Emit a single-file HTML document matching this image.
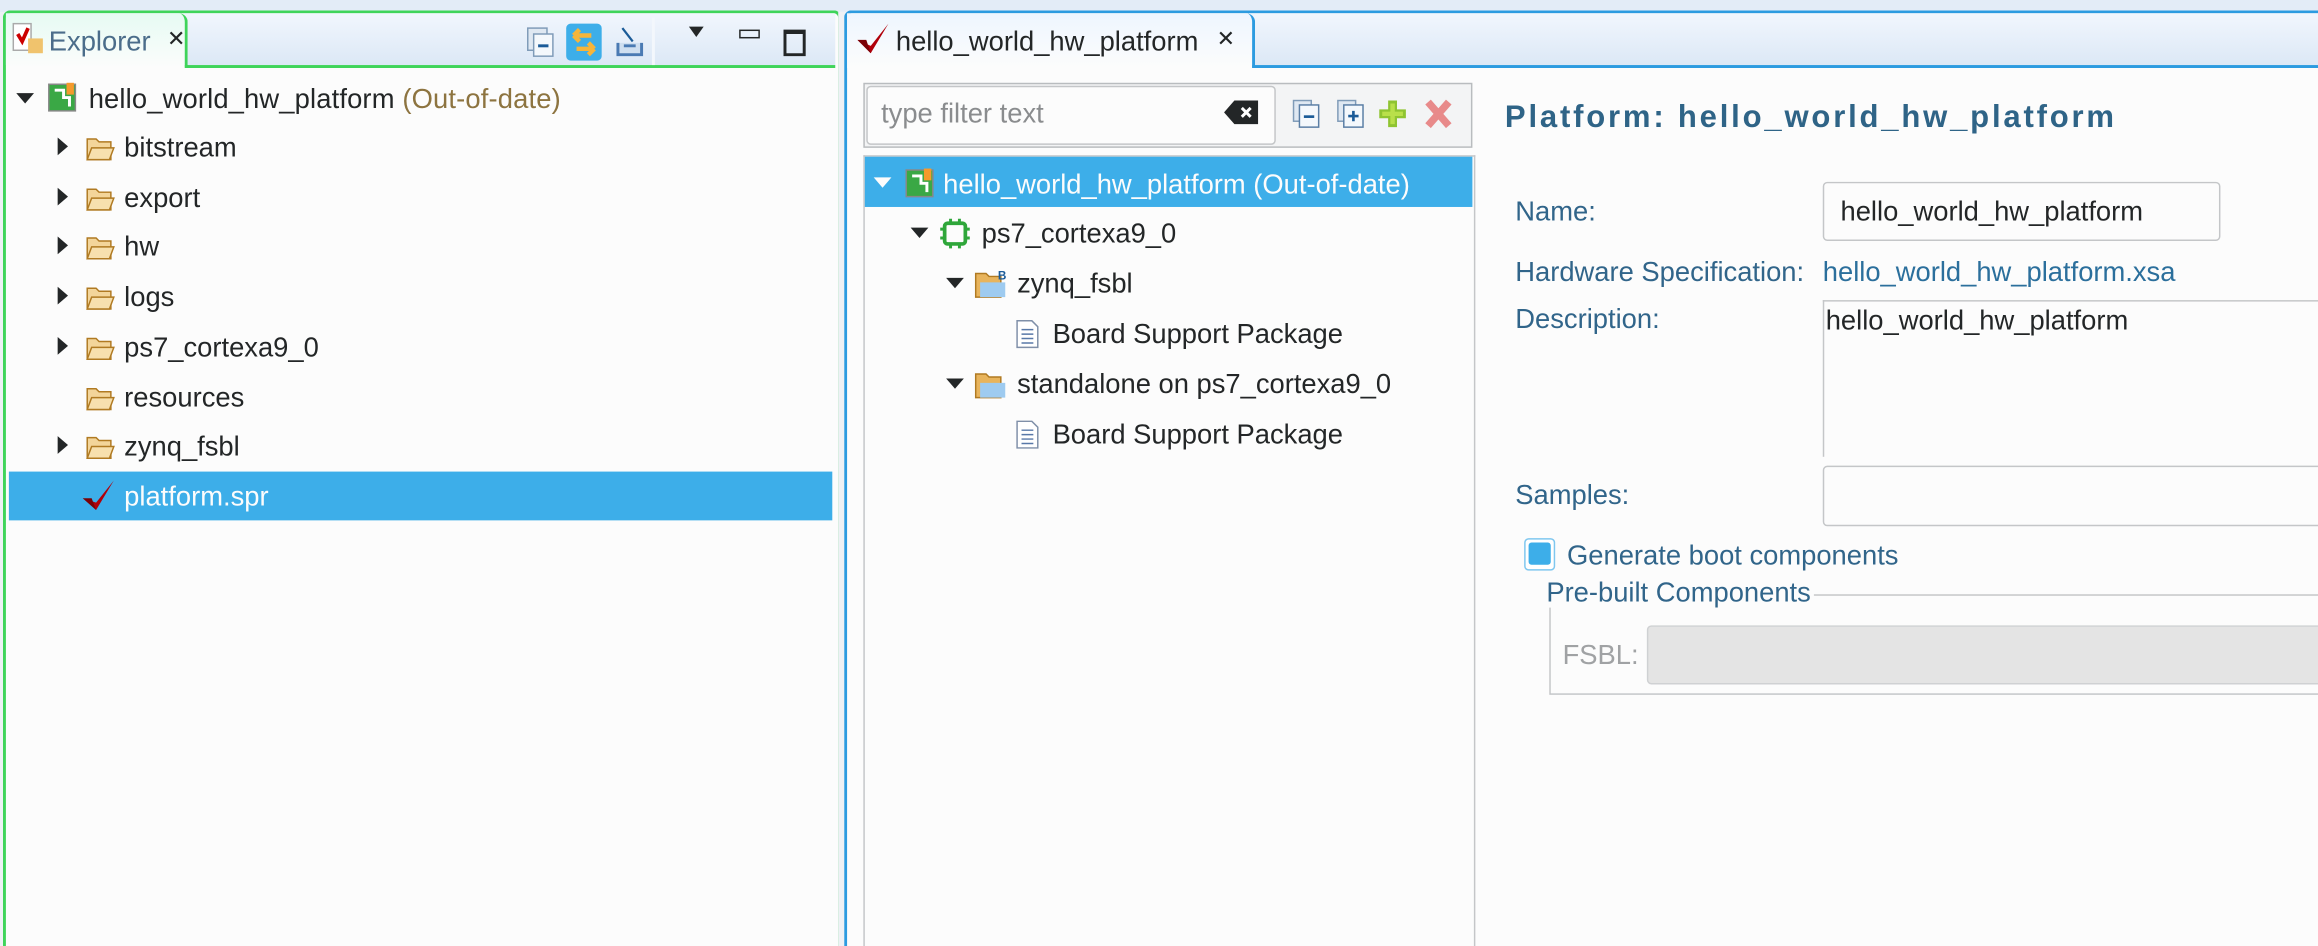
<!DOCTYPE html>
<html><head><meta charset="utf-8">
<style>
html,body{margin:0;padding:0;width:2318px;height:946px;overflow:hidden;background:#eef1f5;}
#w{position:absolute;left:0;top:0;width:1568px;height:640px;overflow:hidden;transform:scale(1.47832);transform-origin:0 0;font-family:"Liberation Sans",sans-serif;font-size:18.5px;color:#232627;}
.a{position:absolute;white-space:nowrap;}
.t{position:absolute;white-space:nowrap;line-height:20px;}
.tri{position:absolute;width:0;height:0;}
.rd{border-top:6px solid transparent;border-bottom:6px solid transparent;border-left:7px solid #232627;}
.dn{border-left:6px solid transparent;border-right:6px solid transparent;border-top:7px solid #232627;}
.lbl{color:#31658a;}
</style></head><body><div id="w">
<div class="a" style="left:0;top:0;width:1568px;height:8px;background:#e3ecf7"></div>

<div class="a" style="left:2px;top:7px;width:563px;height:633px;border:2px solid #3fd45a;border-bottom:none;border-radius:5px 5px 0 0;background:#fcfcfc"></div>
<div class="a" style="left:4px;top:9px;width:561px;height:35px;background:linear-gradient(#f1f6fd,#dce8f6)"></div>
<div class="a" style="left:4px;top:9px;width:121px;height:37px;background:linear-gradient(#e6fbf3,#fcfcfc);border-right:2px solid #3fd45a;border-radius:0 6px 0 0"></div>
<div class="a" style="left:125px;top:44px;width:440px;height:2px;background:#3fd45a"></div>
<div class="a" style="left:441px;top:12px;width:2px;height:32px;background:#f3f7fc"></div>
<svg class="a" style="left:8px;top:15px" width="22" height="22"><rect x="1" y="1" width="12" height="18" fill="#fff" stroke="#aaa"/><path d="M4 8l3 5 4-9" stroke="#c00" stroke-width="2.5" fill="none"/><rect x="11" y="11" width="10" height="10" fill="#f0c36d"/></svg>
<div class="t" style="left:33px;top:18px;color:#4b6d8a">Explorer</div>
<div class="t" style="left:113px;top:17px;font-size:15px">✕</div>
<svg class="a" style="left:356px;top:18px" width="20" height="22"><rect x="1" y="1" width="13" height="15" fill="#dfe8f2" stroke="#7f9bb8"/><rect x="5" y="5" width="13" height="15" fill="#f4f8fc" stroke="#7f9bb8"/><rect x="8" y="12" width="7" height="2" fill="#1b5b98"/></svg>
<div class="a" style="left:383px;top:16px;width:24px;height:25px;background:#3daee9;border-radius:3px"></div>
<svg class="a" style="left:385px;top:18px" width="20" height="22"><path d="M3 6h12M3 6l4-4M3 6l4 4M17 15H5M17 15l-4-4M17 15l-4 4" stroke="#f6b53a" stroke-width="3" fill="none"/></svg>
<svg class="a" style="left:414px;top:17px" width="24" height="24"><path d="M4 12v8h16v-8M8 14h8" stroke="#4a7ab3" stroke-width="2" fill="#cfdff0"/><path d="M7 2l7 9" stroke="#1b5b98" stroke-width="1.5"/></svg>
<div class="tri dn" style="left:466px;top:18px;border-left-width:5px;border-right-width:5px;border-top-width:7px"></div>
<div class="a" style="left:500px;top:20px;width:12px;height:4px;border:1.5px solid #232627"></div>
<div class="a" style="left:530px;top:20px;width:11px;height:13px;border:2px solid #232627;border-top-width:3px"></div>

<div class="tri dn" style="left:11px;top:63px"></div>
<svg class="a" style="left:32px;top:55px" width="20" height="22"><rect x="1" y="2" width="18" height="18" fill="#3aa845" stroke="#888"/><path d="M5 6h6v5h4v6" stroke="#fff" stroke-width="2" fill="none"/><rect x="13" y="1" width="5" height="8" fill="#f59a2c"/></svg>
<div class="t" style="left:60px;top:57px;letter-spacing:0.1px">hello_world_hw_platform <span style="color:#8d7440">(Out-of-date)</span></div>
<div id="ex"></div>
<div class="a" style="left:6px;top:319px;width:557px;height:33px;background:#3daee9"></div>
<svg class="a" style="left:54px;top:324px" width="26" height="24"><path d="M2 13l9 8L23 1 11 16z" fill="#b0000a"/><path d="M2 13l6 0 3 8z" fill="#7a0006"/></svg>
<div class="t" style="left:84px;top:326px;color:#fcfcfc">platform.spr</div>

<div class="a" style="left:567px;top:8px;width:5px;height:632px;background:#eef1f5"></div>

<div class="a" style="left:571px;top:7px;width:1000px;height:633px;border:2px solid #2c9be0;border-bottom:none;border-radius:5px 0 0 0;background:#fcfcfc"></div>
<div class="a" style="left:573px;top:9px;width:995px;height:35px;background:linear-gradient(#f1f6fd,#dce8f6)"></div>
<div class="a" style="left:573px;top:9px;width:274px;height:37px;background:linear-gradient(#eef6ff,#fcfcfc);border-right:2px solid #2c9be0;border-radius:0 6px 0 0"></div>
<div class="a" style="left:847px;top:44px;width:721px;height:2px;background:#2c9be0"></div>
<svg class="a" style="left:578px;top:15px" width="26" height="26"><path d="M2 12l9 9L23 1 11 16z" fill="#b0000a"/><path d="M2 12l6 0 3 9z" fill="#7a0006"/></svg>
<div class="t" style="left:606px;top:18px">hello_world_hw_platform</div>
<div class="t" style="left:823px;top:17px;font-size:15px">✕</div>

<div class="a" style="left:584px;top:56px;width:410px;height:42px;border:1px solid #b9bcbf;background:#f3f4f5"></div>
<div class="a" style="left:586px;top:58px;width:275px;height:38px;border:1px solid #c4c6c8;border-radius:3px;background:#fcfcfc"></div>
<div class="t" style="left:596px;top:67px;color:#8a8c8e">type filter text</div>
<svg class="a" style="left:828px;top:67px" width="24" height="18"><path d="M0 9l7-8h16v16H7z" fill="#232627"/><path d="M12 6l6 6M18 6l-6 6" stroke="#fff" stroke-width="2"/></svg>
<svg class="a" style="left:874px;top:67px" width="20" height="20"><rect x="1" y="1" width="12" height="14" fill="#dfe8f2" stroke="#7f9bb8"/><rect x="5" y="4" width="13" height="15" fill="#f4f8fc" stroke="#5a7ea5"/><rect x="8" y="11" width="7" height="1.8" fill="#1b5b98"/></svg>
<svg class="a" style="left:904px;top:67px" width="20" height="20"><rect x="1" y="1" width="12" height="14" fill="#dfe8f2" stroke="#7f9bb8"/><rect x="5" y="4" width="13" height="15" fill="#f4f8fc" stroke="#5a7ea5"/><path d="M8 11.5h7M11.5 8v7" stroke="#1b5b98" stroke-width="1.8"/></svg>
<svg class="a" style="left:932px;top:66px" width="20" height="22"><path d="M10 2v18M1 11h18" stroke="#8fc431" stroke-width="6"/><path d="M10 4v14M3 11h14" stroke="#b9e04a" stroke-width="3"/></svg>
<svg class="a" style="left:963px;top:66px" width="20" height="22"><path d="M3 3l14 16M17 3L3 19" stroke="#e88a8a" stroke-width="5"/></svg>

<div class="a" style="left:584px;top:105px;width:412px;height:535px;border:1px solid #c4c6c8;border-bottom:none;background:#fcfcfc"></div>
<div class="a" style="left:585px;top:106px;width:411px;height:34px;background:#3daee9"></div>
<div class="tri dn" style="left:591px;top:120px;border-top-color:#fcfcfc"></div>
<svg class="a" style="left:612px;top:113px" width="20" height="22"><rect x="1" y="2" width="18" height="18" fill="#3aa845" stroke="#888"/><path d="M5 6h6v5h4v6" stroke="#fff" stroke-width="2" fill="none"/><rect x="13" y="1" width="5" height="8" fill="#f59a2c"/></svg>
<div class="t" style="left:638px;top:115px;color:#fcfcfc">hello_world_hw_platform (Out-of-date)</div>
<div class="tri dn" style="left:616px;top:154px"></div>
<svg class="a" style="left:635px;top:147px" width="22" height="22"><rect x="4" y="4" width="14" height="14" rx="2" fill="none" stroke="#2fa63a" stroke-width="2.5"/><path d="M8 1v3M14 1v3M8 18v3M14 18v3M1 8h3M1 14h3M18 8h3M18 14h3" stroke="#2fa63a" stroke-width="2"/></svg>
<div class="t" style="left:664px;top:148px">ps7_cortexa9_0</div>
<div class="tri dn" style="left:640px;top:188px"></div>
<svg class="a" style="left:659px;top:181px" width="24" height="22"><path d="M1 4h7l2 2h8v14H1z" fill="#e8b45c" stroke="#b07a22"/><path d="M4 10h17v10H4z" fill="#9ecbf0"/><text x="16" y="8" font-size="8" font-family="Liberation Sans" font-weight="bold" fill="#1b5b98">B</text></svg>
<div class="t" style="left:688px;top:182px">zynq_fsbl</div>
<svg class="a" style="left:687px;top:216px" width="16" height="20"><path d="M1 1h10l4 4v14H1z" fill="#fff" stroke="#7f8fa8"/><path d="M4 7h8M4 10h8M4 13h8M4 16h8" stroke="#5878a8"/></svg>
<div class="t" style="left:712px;top:216px">Board Support Package</div>
<div class="tri dn" style="left:640px;top:256px"></div>
<svg class="a" style="left:659px;top:249px" width="24" height="22"><path d="M1 4h7l2 2h8v14H1z" fill="#e8b45c" stroke="#b07a22"/><path d="M4 10h17v10H4z" fill="#9ecbf0"/></svg>
<div class="t" style="left:688px;top:250px">standalone on ps7_cortexa9_0</div>
<svg class="a" style="left:687px;top:284px" width="16" height="20"><path d="M1 1h10l4 4v14H1z" fill="#fff" stroke="#7f8fa8"/><path d="M4 7h8M4 10h8M4 13h8M4 16h8" stroke="#5878a8"/></svg>
<div class="t" style="left:712px;top:284px">Board Support Package</div>

<div class="t" style="left:1018px;top:70px;font-size:21px;font-weight:bold;color:#2f6487;letter-spacing:1.9px">Platform: hello_world_hw_platform</div>
<div class="t lbl" style="left:1025px;top:133px">Name:</div>
<div class="a" style="left:1233px;top:123px;width:267px;height:38px;border:1px solid #c4c6c8;border-radius:3px;background:#fcfcfc"></div>
<div class="t" style="left:1245px;top:133px">hello_world_hw_platform</div>
<div class="t lbl" style="left:1025px;top:174px">Hardware Specification:</div>
<div class="t" style="left:1233px;top:174px;color:#2b6f9c">hello_world_hw_platform.xsa</div>
<div class="t lbl" style="left:1025px;top:206px">Description:</div>
<div class="a" style="left:1233px;top:203px;width:335px;height:105px;border-left:1px solid #c4c6c8;border-top:1px solid #c4c6c8"></div>
<div class="t" style="left:1235px;top:207px">hello_world_hw_platform</div>
<div class="t lbl" style="left:1025px;top:325px">Samples:</div>
<div class="a" style="left:1233px;top:315px;width:340px;height:39px;border:1px solid #c4c6c8;border-radius:3px;background:#fcfcfc"></div>
<div class="a" style="left:1031px;top:364px;width:19px;height:20px;border:1px solid #7fc7ef;border-radius:3px;background:#fff"></div>
<div class="a" style="left:1034px;top:367px;width:15px;height:15px;background:#3daee9;border-radius:2px"></div>
<div class="t lbl" style="left:1060px;top:366px">Generate boot components</div>
<div class="a" style="left:1048px;top:402px;width:530px;height:66px;border:1px solid #c4c6c8"></div>
<div class="t lbl" style="left:1046px;top:391px;background:#fcfcfc;padding-right:2px">Pre-built Components</div>
<div class="t" style="left:1057px;top:433px;color:#a0a2a4">FSBL:</div>
<div class="a" style="left:1114px;top:423px;width:460px;height:38px;border:1px solid #cfd1d3;border-radius:3px;background:#e4e4e4"></div>
</div>
<script>
var rows=[["bitstream",1],["export",1],["hw",1],["logs",1],["ps7_cortexa9_0",1],["resources",0],["zynq_fsbl",1]];
var h="";rows.forEach(function(r,i){var y=100+i*33.7;
if(r[1])h+='<div class="tri rd" style="left:39px;top:'+(y-7)+'px"></div>';
h+='<svg class="a" style="left:58px;top:'+(y-9)+'px" width="20" height="18"><path d="M1 3h6l2 2h8v12H1z" fill="#f3d59a" stroke="#b07a22"/><path d="M1 17l3-8h15l-3 8z" fill="#f7e0ae" stroke="#b07a22"/></svg>';
h+='<div class="t" style="left:84px;top:'+(y-10)+'px">'+r[0]+'</div>';});
document.getElementById("ex").outerHTML=h;
</script>
</body></html>
